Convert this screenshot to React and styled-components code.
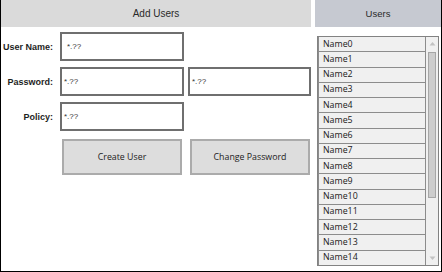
import React from "react";
import styled, { createGlobalStyle } from "styled-components";

const Global = createGlobalStyle`
  html, body { margin: 0; padding: 0; background: #fff; }
  * { box-sizing: border-box; }
`;

const Window = styled.div`
  width: 442px;
  height: 272px;
  display: flex;
  gap: 4px;
  border: 1px solid #000;
  border-top: none;
  background: #fff;
  overflow: hidden;
`;

const Column = styled.div`
  width: ${p => p.width}px;
  display: flex;
  flex-direction: column;
  min-height: 0;
`;

const Header = styled.div`
  height: 27px;
  flex: none;
  display: flex;
  align-items: center;
  justify-content: center;
  background: ${p => p.bg};
  color: #2a2a2a;
  font-family: "Liberation Sans", Arial, sans-serif;
  font-size: ${p => p.size || 10}px;
`;

const Form = styled.div`
  display: grid;
  grid-template-columns: 55px 124px 123px;
  grid-auto-rows: 29px;
  column-gap: 4px;
  row-gap: 6px;
  padding-top: 5px;
`;

const Label = styled.div`
  display: flex;
  align-items: center;
  justify-content: flex-end;
  margin-right: 3px;
  white-space: nowrap;
  font-family: "Liberation Sans", Arial, sans-serif;
  font-weight: bold;
  font-size: 9px;
  color: #1e1e1e;
`;

const Input = styled.div`
  display: flex;
  align-items: center;
  padding-left: ${p => p.pad || 2}px;
  border: 2px solid #6f6f6f;
  background: #fff;
  font-family: "Liberation Sans", Arial, sans-serif;
  font-size: 8px;
  color: #333;
`;

const Buttons = styled.div`
  display: flex;
  gap: 8px;
  margin: 8px 0 0 61px;
`;

const Button = styled.button`
  width: 120px;
  height: 36px;
  border: 2px solid #ababab;
  background: #dddddd;
  color: #222;
  font-family: "Open Sans", sans-serif;
  font-size: 8.8px;
  padding: 0;
`;

const ListBox = styled.div`
  flex: 1;
  min-height: 0;
  margin: 9px 2px 5px 2px;
  border: 1px solid #828282;
  display: flex;
  overflow: hidden;
`;

const Items = styled.div`
  flex: 1;
  display: flex;
  flex-direction: column;
`;

const Item = styled.div`
  height: 15.25px;
  flex: none;
  display: flex;
  align-items: center;
  padding-left: 4px;
  background: #f0f0f0;
  border-left: 1px solid #8c8c8c;
  border-right: 1px solid #8c8c8c;
  border-bottom: 1px solid #8c8c8c;
  font-family: "Open Sans", sans-serif;
  font-size: 8.8px;
  color: #1a1a1a;
  line-height: 1;
`;

const Scrollbar = styled.div`
  width: 12px;
  flex: none;
  display: flex;
  flex-direction: column;
  align-items: center;
  background: #f0f0f0;
  padding: 4px 0;
`;

const Arrow = styled.svg`
  width: 7px;
  height: 5px;
  flex: none;
`;

const Thumb = styled.div`
  width: 8px;
  height: 146px;
  margin-top: 6px;
  background: #cdcdcd;
  border: 1px solid #a6a6a6;
`;

const Spacer = styled.div`
  flex: 1;
`;

const names = Array.from({ length: 15 }, (_, i) => `Name${i}`);

export default function App() {
  return (
    <>
      <Global />
      <Window>
        <Column width={310}>
          <Header bg="#dadada">Add Users</Header>
          <Form>
            <Label>User Name:</Label>
            <Input pad={5}>*.??</Input>
            <div />
            <Label>Password:</Label>
            <Input>*.??</Input>
            <Input>*.??</Input>
            <Label>Policy:</Label>
            <Input>*.??</Input>
          </Form>
          <Buttons>
            <Button>Create User</Button>
            <Button>Change Password</Button>
          </Buttons>
        </Column>
        <Column width={126}>
          <Header bg="#c6c9d1" size={9.5}>Users</Header>
          <ListBox>
            <Items>
              {names.map(n => (
                <Item key={n}>{n}</Item>
              ))}
            </Items>
            <Scrollbar>
              <Arrow viewBox="0 0 7 5">
                <path d="M0.5 4.5 L3.5 1 L6.5 4.5 Z" fill="#c2c2c2" />
              </Arrow>
              <Thumb />
              <Spacer />
              <Arrow viewBox="0 0 7 5">
                <path d="M0.5 0.5 L3.5 4 L6.5 0.5 Z" fill="#c2c2c2" />
              </Arrow>
            </Scrollbar>
          </ListBox>
        </Column>
      </Window>
    </>
  );
}
